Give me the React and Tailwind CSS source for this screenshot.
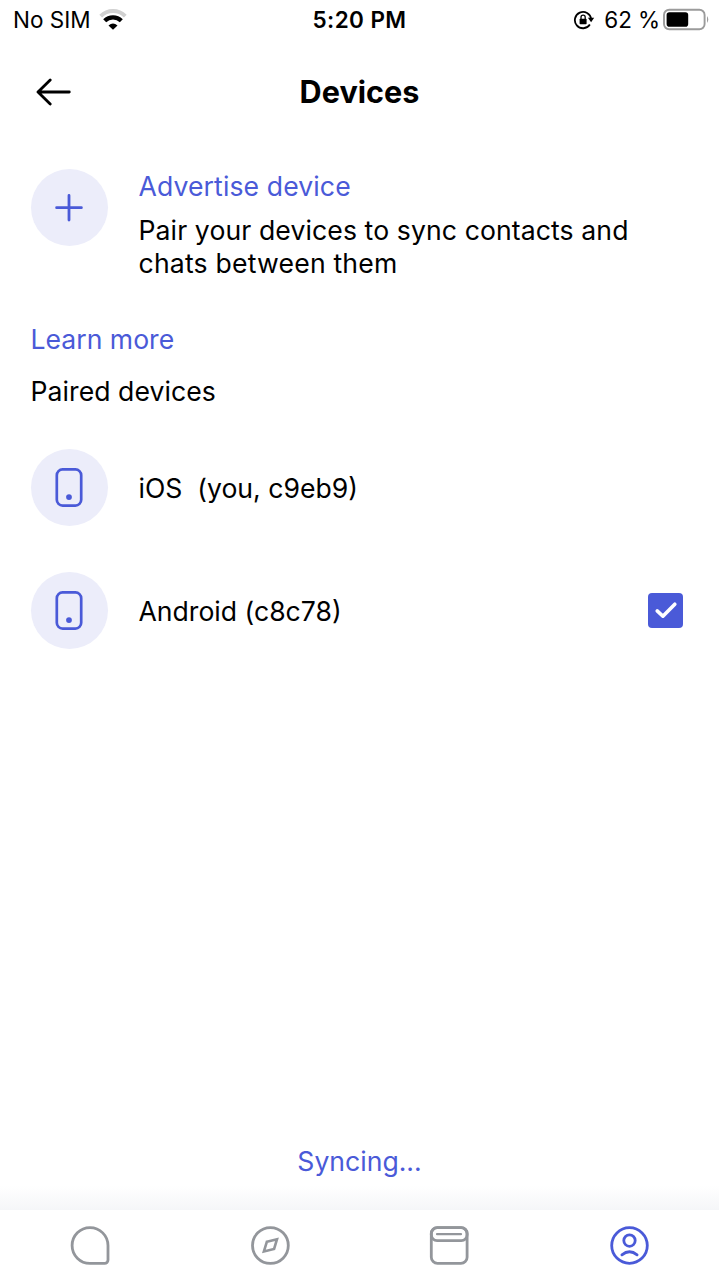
import React from "react";

function WifiIcon() {
  return (
    <svg className="ml-[8.5px] h-[22px] w-[28px]" viewBox="0 0 28 22" fill="none">
      <path d="M1.7 7.1 A17.5 17.5 0 0 1 26.3 7.1" stroke="#d0d0d0" strokeWidth="3.9" />
      <path d="M5.7 11.8 A11.6 11.6 0 0 1 22.3 11.8" stroke="#000" strokeWidth="4.2" />
      <path d="M9.5 16.4 Q14 12.6 18.5 16.4 L14 20.8 Z" fill="#000" />
    </svg>
  );
}

function RotationLockIcon() {
  return (
    <svg className="h-[20px] w-[22px]" viewBox="0 0 22 20" fill="none">
      <path d="M16.9 14.6 A8.2 8.2 0 1 1 18.2 9" stroke="#000" strokeWidth="1.8" />
      <path d="M14.9 7.8 H21.2 L18.1 12.2 Z" fill="#000" />
      <rect x="6.6" y="8.8" width="7" height="5.4" rx="0.7" fill="#000" />
      <path d="M8 9 V7.3 a2.1 2.1 0 0 1 4.2 0 V9" stroke="#000" strokeWidth="1.3" />
    </svg>
  );
}

function BatteryIcon() {
  return (
    <svg className="ml-[2px] h-[24px] w-[48px]" viewBox="0 0 48 24" fill="none">
      <rect x="2" y="1.7" width="40.6" height="19.6" rx="5.2" stroke="#9b9b9b" strokeWidth="1.9" />
      <rect x="4.6" y="4.3" width="21.6" height="14.4" rx="2.8" fill="#000" />
      <path d="M45 8.1 q2.6 3.4 0 6.8 Z" fill="#9b9b9b" />
    </svg>
  );
}

function StatusBar() {
  return (
    <div className="grid h-[40px] grid-cols-[1fr_auto_1fr] items-center px-[9px] text-[22.5px] leading-[40px]">
      <div className="flex items-center pl-[4px]">
        <span>No SIM</span>
        <WifiIcon />
      </div>
      <div className="font-semibold tracking-[0.4px]">5:20 PM</div>
      <div className="flex items-center justify-end">
        <RotationLockIcon />
        <span className="ml-[9px] whitespace-nowrap tracking-[-0.1px]">62 %</span>
        <BatteryIcon />
      </div>
    </div>
  );
}

function Avatar({ children }) {
  return (
    <div className="flex h-[77px] w-[77px] shrink-0 items-center justify-center rounded-full bg-[#ecedfa]">
      {children}
    </div>
  );
}

function PhoneIcon() {
  return (
    <svg className="h-[40px] w-[28px]" viewBox="0 0 28 40" fill="none">
      <rect x="1.8" y="1.4" width="24.4" height="36.2" rx="5.8" stroke="#4a5ad8" strokeWidth="2.7" />
      <circle cx="14" cy="29.1" r="2.9" fill="#4a5ad8" />
    </svg>
  );
}

function DeviceRow({ name, children }) {
  return (
    <div className="flex h-[77px] items-center">
      <Avatar>
        <PhoneIcon />
      </Avatar>
      <span className="ml-[31px] flex-1 whitespace-pre pt-[2px]">{name}</span>
      {children}
    </div>
  );
}

function Checkbox() {
  return (
    <div className="mr-[36px] flex h-[35px] w-[35px] items-center justify-center rounded-[4px] bg-[#4a5ad8]">
      <svg className="h-[35px] w-[35px]" viewBox="0 0 35 35" fill="none">
        <path d="M9.2 17.9 L14.9 23.2 L26.8 11.2" stroke="#fff" strokeWidth="3.6" strokeLinecap="round" strokeLinejoin="round" />
      </svg>
    </div>
  );
}

function NavIcon({ active, children }) {
  return (
    <button className={active ? "flex justify-center text-[#4a5ad8]" : "flex justify-center text-[#93969b]"}>
      <svg className="h-[40px] w-[40px]" viewBox="0 0 40 40" fill="none" stroke="currentColor" strokeWidth="2.8" strokeLinecap="round" strokeLinejoin="round">
        {children}
      </svg>
    </button>
  );
}

function BottomNav() {
  return (
    <nav className="grid h-[70px] grid-cols-4 items-center bg-white">
      <NavIcon>
        <path d="M20 2.6 A17.8 17.8 0 0 0 20 38.4 H34.6 A3.4 3.4 0 0 0 38 35 V20.6 A18 18 0 0 0 20 2.6 Z" />
      </NavIcon>
      <NavIcon>
        <circle cx="20.4" cy="20.5" r="17.9" />
        <path d="M16.9 16.7 L27 14.2 L24.1 23.9 L13.9 26.4 Z" strokeWidth="2.6" strokeLinejoin="miter" />
      </NavIcon>
      <NavIcon>
        <rect x="2.3" y="2.6" width="35.8" height="35.8" rx="6.2" />
        <rect x="2.3" y="2.6" width="35.8" height="13" rx="5.8" />
        <path d="M8.1 9.1 H31.9" strokeWidth="2.4" />
      </NavIcon>
      <NavIcon active>
        <circle cx="20.5" cy="20.5" r="17.8" />
        <circle cx="20.5" cy="15.6" r="5.7" />
        <path d="M12.9 29.8 Q20.5 23.8 28.1 29.8" />
      </NavIcon>
    </nav>
  );
}

export default function App() {
  return (
    <div className="flex h-[1280px] w-full flex-col overflow-hidden bg-white font-['Inter',sans-serif] text-[26.6px] leading-[33px] text-black">
      <StatusBar />

      <header className="grid h-[104px] grid-cols-[1fr_auto_1fr] items-center">
        <button className="pl-[36px]">
          <svg className="h-[28px] w-[36px]" viewBox="0 0 36 28" fill="none" stroke="#000" strokeWidth="2.8" strokeLinecap="round" strokeLinejoin="round">
            <path d="M14.2 1.9 L2 14 L14.2 26.1 M2 14 H33.3" />
          </svg>
        </button>
        <h1 className="pb-[2px] text-[30.6px] font-bold">Devices</h1>
        <div />
      </header>

      <main className="flex flex-1 flex-col pl-[30.5px]">
        <section className="mt-[25px] flex">
          <Avatar>
            <svg className="h-[28px] w-[28px]" viewBox="0 0 28 28" fill="none">
              <path d="M14 1.4 V26 M1.6 13.7 H26.4" stroke="#4a5ad8" strokeWidth="2.8" strokeLinecap="round" />
            </svg>
          </Avatar>
          <div className="ml-[31px] pt-[1px] tracking-[0.1px]">
            <a className="block text-[#4a5ad8]">Advertise device</a>
            <p className="mt-[11px] w-[520px]">
              Pair your devices to sync contacts and
              <br />
              <span className="tracking-[0.2px]">chats between them</span>
            </p>
          </div>
        </section>

        <a className="mt-[43px] block text-[#4a5ad8]">Learn more</a>
        <h2 className="mt-[19px] tracking-[0.05px]">Paired devices</h2>

        <section className="mt-[41px] flex flex-col gap-[46px]">
          <DeviceRow name="iOS  (you, c9eb9)" />
          <DeviceRow name="Android (c8c78)">
            <Checkbox />
          </DeviceRow>
        </section>

        <div className="mr-[30.5px] mt-auto pb-[32px] text-center text-[#4a5ad8]">Syncing...</div>
      </main>
      <div className="-mt-[24px] h-[24px] shrink-0 bg-linear-to-b from-white to-[#f5f6f8]" />
      <BottomNav />
    </div>
  );
}
